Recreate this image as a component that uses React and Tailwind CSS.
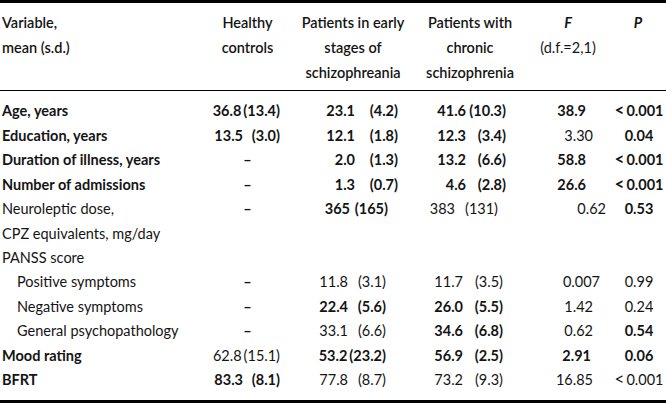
import React from "react";

const LT = <span className="text-[17px] leading-none mr-[2px]">&lt;</span>;

const rows = [
  { label: "Age, years", lb: true, h: ["36.8", "(13.4)", true], e: ["23.1", "(4.2)", true, "up"], c: ["41.6", "(10.3)", true, "up"], f: ["38.9", true, "pr-[24px]"], p: [<>{LT}0.001</>, true] },
  { label: "Education, years", lb: true, h: ["13.5", "(3.0)", true], e: ["12.1", "(1.8)", true, "up"], c: ["12.3", "(3.4)", true, "up"], f: ["3.30", false, "pr-[17px]"], p: ["0.04", true] },
  { label: "Duration of illness, years", lb: true, h: null, e: ["2.0", "(1.3)", true, "up"], c: ["13.2", "(6.6)", true, "up"], f: ["58.8", true, "pr-[24px]"], p: [<>{LT}0.001</>, true] },
  { label: "Number of admissions", lb: true, h: null, e: ["1.3", "(0.7)", true, "up"], c: ["4.6", "(2.8)", true, "up"], f: ["26.6", true, "pr-[24px]"], p: [<>{LT}0.001</>, true] },
  { label: "Neuroleptic dose,", h: null, e: ["365", "(165)", true, "mid"], c: ["383", "(131)", false, "mid"], f: ["0.62", false, "pr-[4px]"], p: ["0.53", true] },
  { label: "CPZ equivalents, mg/day", blank: true },
  { label: "PANSS score", blank: true },
  { label: "Positive symptoms", sub: true, h: null, e: ["11.8", "(3.1)", false, "low"], c: ["11.7", "(3.5)", false, "low"], f: ["0.007", false, "pr-[10px]"], p: ["0.99", false] },
  { label: "Negative symptoms", sub: true, h: null, e: ["22.4", "(5.6)", true, "low"], c: ["26.0", "(5.5)", true, "low"], f: ["1.42", false, "pr-[17px]"], p: ["0.24", false] },
  { label: "General psychopathology", sub: true, h: null, e: ["33.1", "(6.6)", false, "low"], c: ["34.6", "(6.8)", true, "low"], f: ["0.62", false, "pr-[17px]"], p: ["0.54", true] },
  { label: "Mood rating", lb: true, h: ["62.8", "(15.1)", false], e: ["53.2", "(23.2)", true, "low"], c: ["56.9", "(2.5)", true, "low"], f: ["2.91", true, "pr-[19px]"], p: ["0.06", true] },
  { label: "BFRT", lb: true, h: ["83.3", "(8.1)", true], e: ["77.8", "(8.7)", false, "low"], c: ["73.2", "(9.3)", false, "low"], f: ["16.85", false, "pr-[17px]"], p: [<>{LT}0.001</>, false] },
];

// [cell padding-right, paren min width]
const healthyW = ["pr-[10px]", "min-w-[35px]"];

const earlyW = {
  up: ["pr-[12px]", "min-w-[41px]"],
  mid: ["pr-[22px]", "min-w-[36px]"],
  low: ["pr-[24px]", "min-w-[36px]"],
};

const chronicW = {
  up: ["pr-[14px]", "min-w-[38px]"],
  mid: ["pr-[22px]", "min-w-[41px]"],
  low: ["pr-[17px]", "min-w-[38px]"],
};

const Pair = ({ v, widths }) => (
  <div className={`flex justify-end whitespace-nowrap ${widths[0]} ${v[2] ? "font-bold" : "font-normal"}`}>
    <span>{v[0]}</span>
    <span className={`${widths[1]} ml-[2px] text-right`}>{v[1]}</span>
  </div>
);

const Dash = () => <div className="text-center font-bold">–</div>;

const App = () => {
  return (
    <div
      className="w-[666px] h-[404px] bg-white text-[#141414] text-[14.5px] overflow-hidden"
      style={{ fontFamily: "Lato, 'Open Sans', sans-serif" }}
    >
      <div className="h-[3px] bg-black" />

      <div className="grid grid-cols-[205px_85px_120px_110px_90px_56px] pt-[6.5px] pb-[5px] leading-[25px] font-semibold whitespace-nowrap">
        <div className="pl-[2px]">
          <div>Variable,</div>
          <div>mean (s.d.)</div>
        </div>
        <div className="text-center">
          <div>Healthy</div>
          <div>controls</div>
        </div>
        <div className="text-center pl-[6px]">
          <div>Patients in early</div>
          <div>stages of</div>
          <div>schizophreania</div>
        </div>
        <div className="text-center pl-[10px]">
          <div>Patients with</div>
          <div>chronic</div>
          <div>schizophrenia</div>
        </div>
        <div className="text-center pl-[6px]">
          <div className="italic font-bold">F</div>
          <div className="font-normal">(d.f.=2,1)</div>
        </div>
        <div className="text-center">
          <div className="italic font-bold">P</div>
        </div>
      </div>

      <div className="h-px bg-black" />

      <div className="pt-[8.75px] pb-[7.75px] leading-[24.45px]">
        {rows.map((r) => (
          <div key={r.label} className="grid grid-cols-[205px_85px_120px_110px_90px_56px]">
            <div className={`whitespace-nowrap ${r.sub ? "pl-[17px]" : "pl-[2px]"} ${r.lb ? "font-bold" : "font-normal"}`}>
              {r.label}
            </div>
            {r.blank ? (
              <>
                <div />
                <div />
                <div />
                <div />
                <div />
              </>
            ) : (
              <>
                {r.h ? <Pair v={r.h} widths={healthyW} /> : <Dash />}
                <Pair v={r.e} widths={earlyW[r.e[3]]} />
                <Pair v={r.c} widths={chronicW[r.c[3]]} />
                <div className={`text-right ${r.f[2]} ${r.f[1] ? "font-bold" : "font-normal"}`}>{r.f[0]}</div>
                <div className={`text-center pl-[2px] whitespace-nowrap ${r.p[1] ? "font-bold" : "font-normal"}`}>{r.p[0]}</div>
              </>
            )}
          </div>
        ))}
      </div>

      <div className="h-[3px] bg-black" />
    </div>
  );
};

export default App;
